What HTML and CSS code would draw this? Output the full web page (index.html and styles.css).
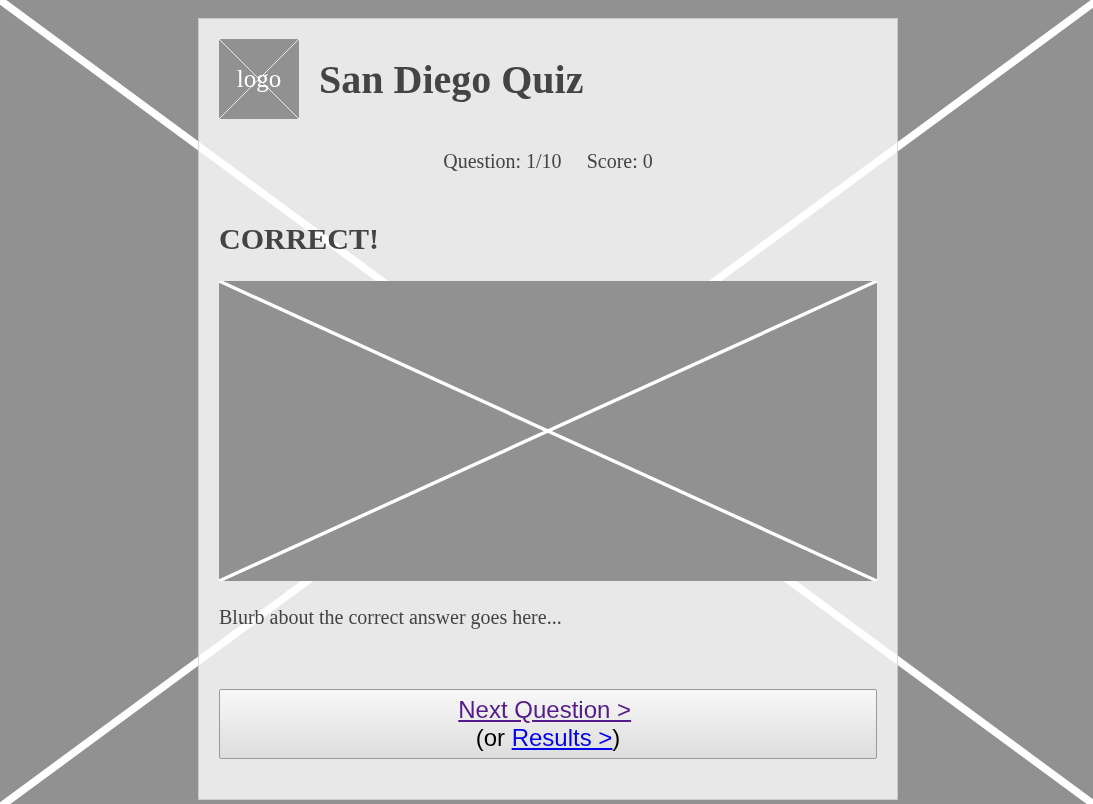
FILE: index.html
```html
<!DOCTYPE html>
<html lang="en">
<head>
<meta charset="utf-8">
<meta name="viewport" content="width=device-width, initial-scale=1">
<title>San Diego Quiz</title>
<link rel="stylesheet" href="styles.css">
</head>
<body>
<svg class="backdrop" viewBox="0 0 1093 804" preserveAspectRatio="none" aria-hidden="true">
  <path d="M-11 -8L1104 812M1104 -5L-11 815" stroke="#fff" stroke-width="7.6"/>
</svg>
<main class="quiz">
  <header class="quiz-header">
    <div class="logo">
      <svg class="logo-cross" viewBox="0 0 80 80" aria-hidden="true">
        <path d="M0 0L80 80M80 0L0 80" stroke="#fff" stroke-width="0.8"/>
      </svg>
      <span class="logo-text">logo</span>
    </div>
    <h1 class="title">San Diego Quiz</h1>
  </header>
  <div class="status">
    <span>Question: 1/10</span>
    <span>Score: 0</span>
  </div>
  <h2 class="result">CORRECT!</h2>
  <svg class="photo" viewBox="0 0 658 300" preserveAspectRatio="none" role="img" aria-label="Answer picture">
    <path d="M0 0L658 300M658 0L0 300" stroke="#fff" stroke-width="3.4"/>
  </svg>
  <p class="blurb">Blurb about the correct answer goes here...</p>
  <button class="next" type="button"><a class="link visited" href="#next">Next Question &gt;</a>&nbsp;<br>(or <a class="link" href="#results">Results &gt;</a>)</button>
</main>
</body>
</html>
```
FILE: styles.css
```css
* {
  box-sizing: border-box;
}

body {
  margin: 0;
  padding: 18px 16px 4px 19px;
  background: #919191;
  color: #444;
  font-family: "Liberation Serif", "Times New Roman", serif;
  font-size: 20px;
  line-height: 24px;
}

.backdrop {
  position: fixed;
  inset: 0;
  z-index: -1;
  width: 100%;
  height: 100%;
}

.quiz {
  max-width: 700px;
  margin: 0 auto;
  padding: 20px 20px 40px;
  border: 1px solid rgba(160, 160, 160, 0.4);
  background: rgba(255, 255, 255, 0.79);
}

.quiz-header {
  display: flex;
  align-items: center;
  gap: 20px;
}

.logo {
  display: grid;
  place-items: center;
  flex: none;
  width: 80px;
  height: 80px;
  border-radius: 2px;
  background: #919191;
  color: #fff;
  font-size: 25px;
}

.logo-cross,
.logo-text {
  grid-area: 1 / 1;
}

.logo-cross {
  width: 100%;
  height: 100%;
}

.title {
  margin: 0;
  padding-top: 2px;
  font-size: 40px;
  line-height: 46px;
}

.status {
  display: flex;
  justify-content: center;
  gap: 25px;
  margin-top: 30px;
}

.result {
  margin: 48px 0 24px;
  font-size: 30px;
  line-height: 36px;
}

.photo {
  display: block;
  width: 100%;
  height: 300px;
  background: #919191;
}

.blurb {
  margin: 24px 0 60px;
}

.next {
  display: block;
  width: 100%;
  padding: 6px;
  border: 1px solid #999;
  border-radius: 2px;
  background: linear-gradient(#f8f8f8, #ddd);
  color: #000;
  font-family: "Liberation Sans", Arial, sans-serif;
  font-size: 24px;
  line-height: 28px;
}

.link {
  color: #00e;
}

.visited {
  color: #551a8b;
}
```
